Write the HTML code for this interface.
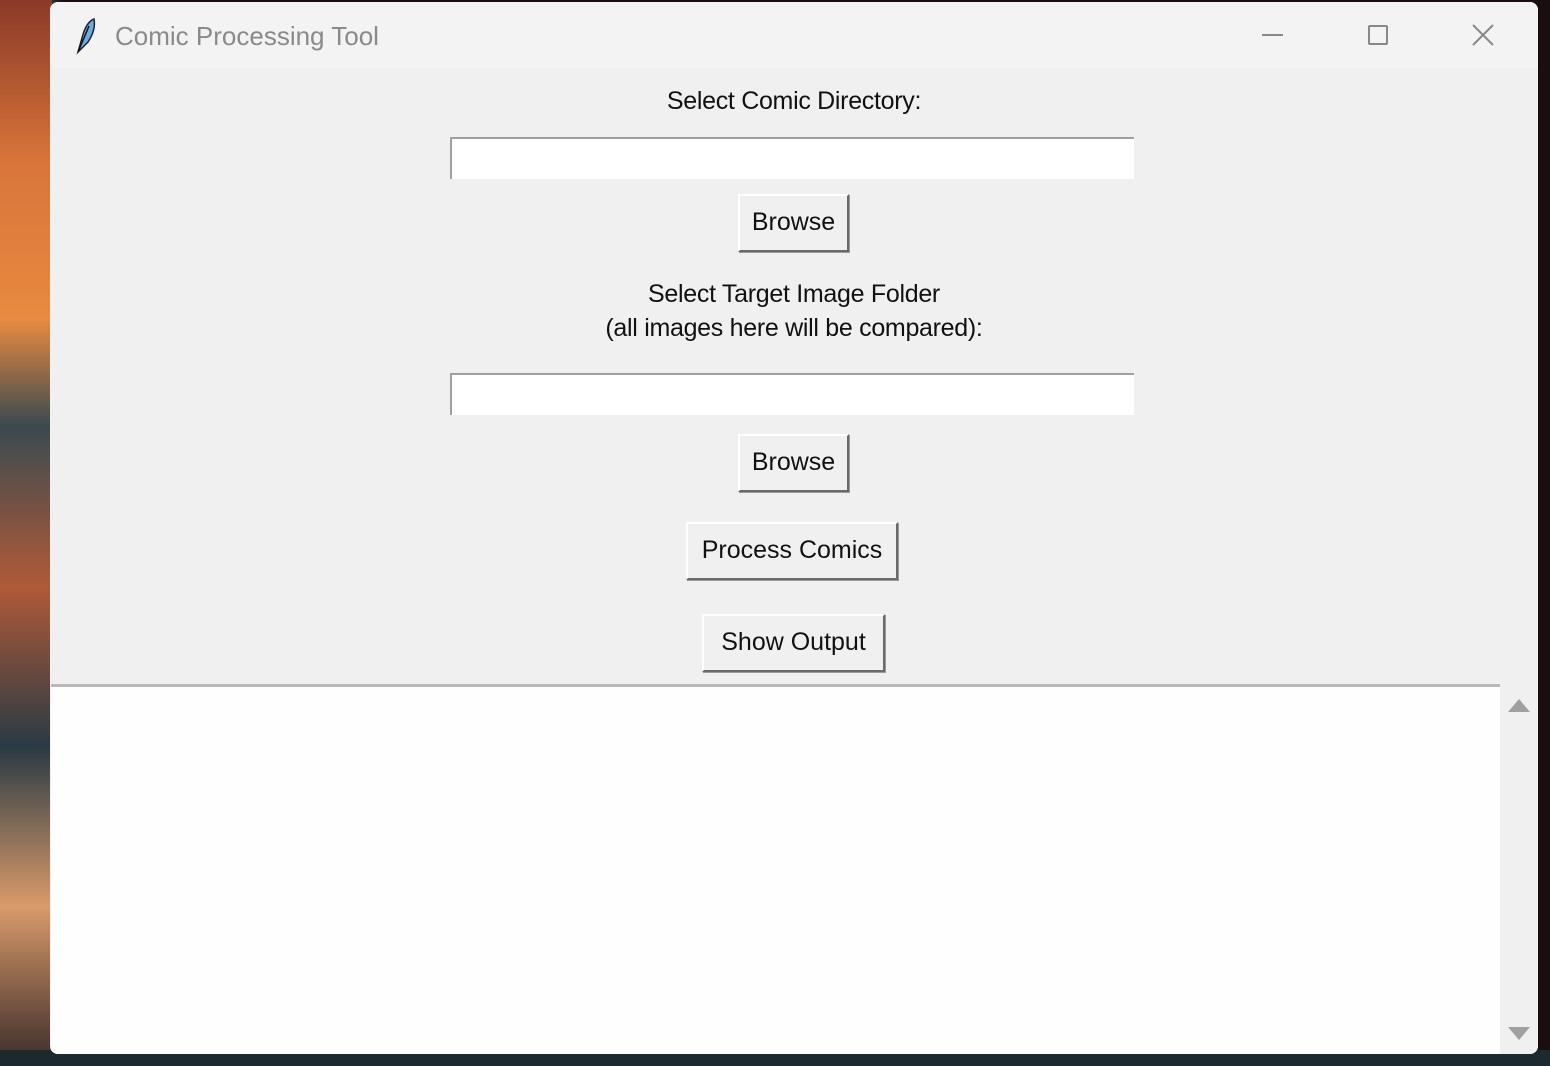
<!DOCTYPE html>
<html><head><style>
*{margin:0;padding:0;box-sizing:border-box}
body{width:1550px;height:1066px;overflow:hidden;position:relative;background:linear-gradient(90deg,#c8643a 0,#7a3a30 2%,#2e4a52 3%,#1a0e10 4%,#1a0e10 100%);font-family:"Liberation Sans","DejaVu Sans",sans-serif}
.leftbg{position:absolute;left:0;top:0;width:52px;height:1066px;background:linear-gradient(180deg,#8a3a28 0,#d8743a 15%,#e88a40 30%,#3a4a50 40%,#b05a38 55%,#2a3a44 70%,#d89a6a 85%,#3a2a2a 100%)}
.botbg{position:absolute;left:0;top:1050px;width:1550px;height:16px;background:#1c2a2e}
.win{position:absolute;left:50px;top:2px;width:1488px;height:1052px;background:#f0f0f0;border-radius:8px;overflow:hidden}
.title{position:absolute;left:0;top:0;width:100%;height:66px;background:#f3f3f3}
.title span{position:absolute;left:65px;top:19px;font-size:26px;color:#8a8a8a;font-family:"Liberation Sans",sans-serif}
.lbl{position:absolute;left:0;width:1488px;text-align:center;font-size:25px;color:#111;line-height:34px;letter-spacing:-0.3px}
.entry{position:absolute;left:400px;width:684px;height:42px;background:#fff;border-top:2px solid #a0a0a0;border-left:2px solid #a0a0a0}
.btn{position:absolute;background:#f0f0f0;border:2px solid;border-color:#fff #6a6a6a #6a6a6a #fff;box-shadow:1px 1px 0 #999;font-size:25px;color:#111;text-align:center;line-height:52px}
.text{position:absolute;left:1px;top:682px;width:1449px;height:370px;background:#fefefe;border-top:3px solid #b8b8b8}
.sb{position:absolute;left:1450px;top:682px;width:38px;height:370px;background:#f0f0f0}
</style></head><body>
<div class="leftbg"></div><div class="botbg"></div>
<div class="win">
 <div class="title">
  <svg style="position:absolute;left:22px;top:14px" width="28" height="40" viewBox="0 0 28 40"><path d="M6 36 L10 22 Q14 6 22 3 Q24 14 16 26 Z" fill="#6aaee0" stroke="#223" stroke-width="1.5"/><path d="M6 36 L17 10" stroke="#111" stroke-width="1.5"/></svg>
  <span>Comic Processing Tool</span>
  <div style="position:absolute;left:1212px;top:32px;width:21px;height:2px;background:#888"></div>
  <div style="position:absolute;left:1318px;top:23px;width:20px;height:20px;border:2px solid #888;border-radius:2px"></div>
  <svg style="position:absolute;left:1422px;top:22px" width="22" height="22"><path d="M1 1L21 21M21 1L1 21" stroke="#888" stroke-width="2"/></svg>
 </div>
 <div class="lbl" style="top:82px">Select Comic Directory:</div>
 <div class="entry" style="top:135px"></div>
 <div class="btn" style="left:688px;top:192px;width:111px;height:58px">Browse</div>
 <div class="lbl" style="top:275px">Select Target Image Folder<br>(all images here will be compared):</div>
 <div class="entry" style="top:371px"></div>
 <div class="btn" style="left:688px;top:432px;width:111px;height:58px">Browse</div>
 <div class="btn" style="left:636px;top:520px;width:212px;height:58px">Process Comics</div>
 <div class="btn" style="left:652px;top:612px;width:183px;height:58px">Show Output</div>
 <div class="text"></div>
 <div class="sb">
  <svg style="position:absolute;left:8px;top:13px" width="22" height="16"><path d="M0 15L11 2L22 15Z" fill="#a0a0a0"/></svg>
  <svg style="position:absolute;left:8px;top:342px" width="22" height="16"><path d="M0 1L11 14L22 1Z" fill="#a0a0a0"/></svg>
 </div>
</div>
</body></html>
